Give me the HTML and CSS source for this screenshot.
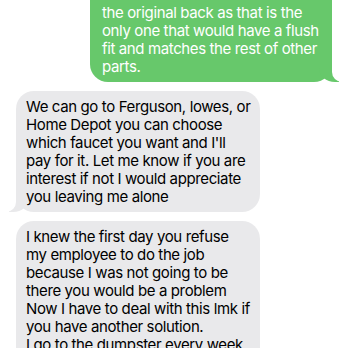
FILE: index.html
```html
<!DOCTYPE html>
<html lang="en">
<head>
    <meta charset="UTF-8">
    <meta name="viewport" content="width=device-width, initial-scale=1.0">
    <title>Messages</title>
    <link rel="stylesheet" href="styles.css">
</head>
<body>

    <div class="thread">
        <div class="bubble sent">
            the original back as that is the<br>
            only one that would have a flush<br>
            fit and matches the rest of other<br>
            parts.
        </div>

        <div class="bubble received">
            We can go to Ferguson, lowes, or<br>
            Home Depot you can choose<br>
            which faucet you want and I'll<br>
            pay for it. Let me know if you are<br>
            interest if not I would appreciate<br>
            you leaving me alone
        </div>

        <div class="bubble received">
            I knew the first day you refuse<br>
            my employee to do the job<br>
            because I was not going to be<br>
            there you would be a problem<br>
            Now I have to deal with this lmk if<br>
            you have another solution.<br>
            I go to the dumpster every week<br>
            and I never saw it there
        </div>
    </div>

</body>
</html>
```

FILE: styles.css
```css
/* Reset */
* {
    margin: 0;
    padding: 0;
    box-sizing: border-box;
}
body {
    font-family: 'Inter', 'Noto Sans', sans-serif;
    background-color: #ffffff;
    overflow: hidden;
}

/* Conversation */
.thread {
    display: flex;
    flex-direction: column;
    gap: 9px;
    margin-top: -21px;
    padding: 0 16px 0 16px;
}

/* Bubbles */
.bubble {
    position: relative;
    z-index: 0;
    width: 244px;
    padding: 7px 10px 6px 10px;
    border-radius: 18px;
    font-size: 15px;
    line-height: 18px;
    letter-spacing: -0.38px;
    white-space: nowrap;
}
.bubble:before,
.bubble:after {
    content: "";
    position: absolute;
    z-index: -1;
    bottom: 0;
    height: 22px;
}

/* Sent (green) */
.sent {
    align-self: flex-end;
    width: 242px;
    padding: 25px 10px 6px 12px;
    background-color: #67c86b;
    color: #ffffff;
}
.sent:before {
    right: -7px;
    width: 20px;
    background-color: #67c86b;
    border-bottom-left-radius: 16px 14px;
}
.sent:after {
    right: -26px;
    width: 26px;
    background-color: #ffffff;
    border-bottom-left-radius: 10px;
}

/* Received (grey) */
.received {
    align-self: flex-start;
    background-color: #e9e9eb;
    color: #000000;
}
.received:before {
    left: -7px;
    width: 20px;
    background-color: #e9e9eb;
    border-bottom-right-radius: 16px 14px;
}
.received:after {
    left: -26px;
    width: 26px;
    background-color: #ffffff;
    border-bottom-right-radius: 10px;
}
```
